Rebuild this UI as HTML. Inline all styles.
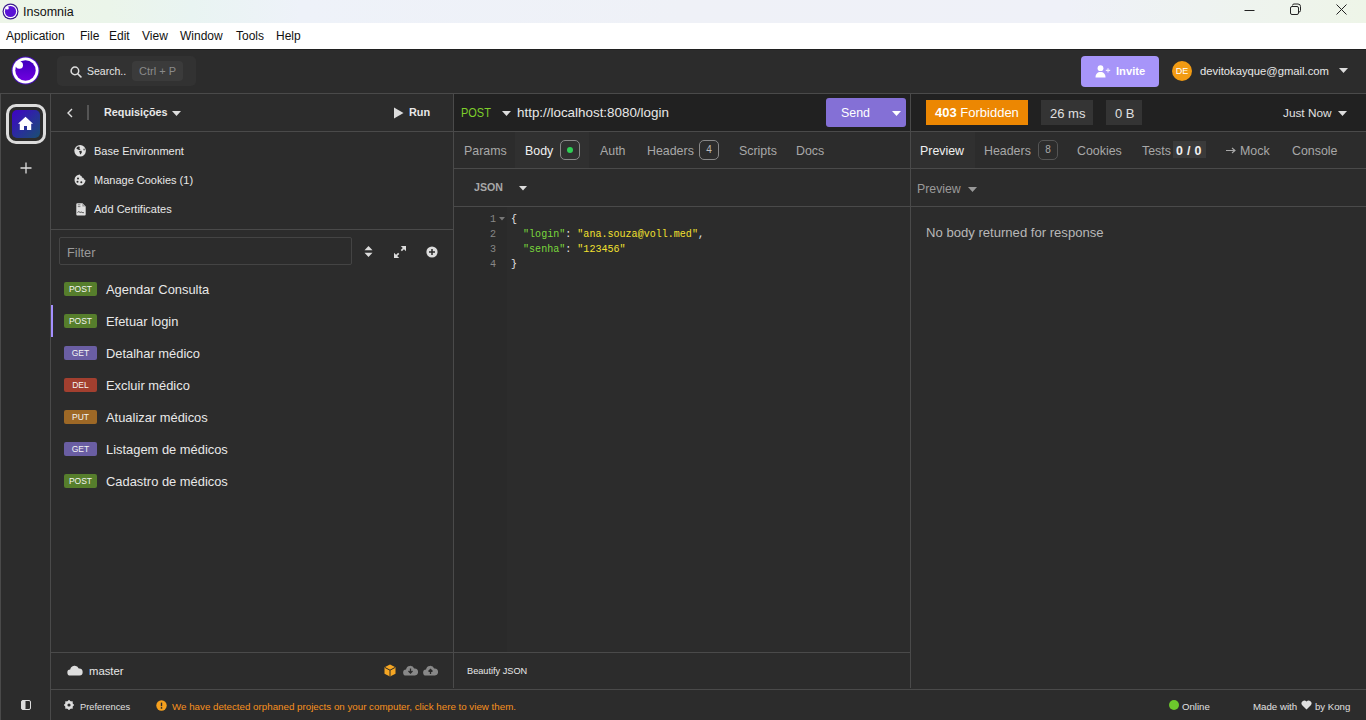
<!DOCTYPE html>
<html><head><meta charset="utf-8">
<style>
*{box-sizing:border-box;margin:0;padding:0}
html,body{width:1366px;height:720px;overflow:hidden;background:#2c2c2c;font-family:"Liberation Sans",sans-serif;color:#ddd}
.a{position:absolute;white-space:nowrap}
#title{left:0;top:0;width:1366px;height:23px;background:linear-gradient(90deg,#edf5e8 0%,#ebf5ea 8%,#e9f4f2 14%,#eef2f9 22%,#eff1f7 50%,#eff1f8 78%,#eef3f1 88%,#eef5e8 100%)}
#menu{left:0;top:23px;width:1366px;height:26px;background:#fff}
.mi{font-size:12px;color:#111;top:29px}
#app{left:0;top:49px;width:1366px;height:671px;background:#2c2c2c;border-top:1px solid #202020}
.line{position:absolute;background:#4a4a4a}
.badge{width:33px;height:14px;border-radius:2px;font-size:8.5px;color:#f4f4f4;text-align:center;line-height:14px}
.tab{top:144px;font-size:12.4px;color:#a8a8a8}
.code{font-family:"Liberation Mono",monospace;font-size:10.05px;line-height:15px}
</style></head>
<body>
<div id="title" class="a"></div>
<svg class="a" style="left:2px;top:3px" width="17" height="17" viewBox="0 0 17 17"><circle cx="8.5" cy="8.5" r="8" fill="#3b1a8c"/><circle cx="8.5" cy="8.5" r="6.8" fill="#fff"/><circle cx="8.5" cy="8.5" r="5.6" fill="#5a12d6"/><circle cx="5.2" cy="5" r="1.6" fill="#fff"/></svg>
<div class="a" style="left:23px;top:5px;font-size:12.5px;color:#111">Insomnia</div>
<!-- window controls -->
<svg class="a" style="left:1240px;top:0" width="126" height="23" viewBox="0 0 126 23">
<path d="M4.5 10.5h10" stroke="#222" stroke-width="1"/>
<rect x="50.5" y="6.5" width="8" height="8" rx="1.5" fill="none" stroke="#222"/>
<path d="M52.5 5.5 q0-1.5 1.5-1.5 h4 q2.5 0 2.5 2.5 v4 q0 1.5 -1.5 1.5" fill="none" stroke="#222"/>
<path d="M96.5 4.5l10 10M106.5 4.5l-10 10" stroke="#222" stroke-width="1"/>
</svg>
<div id="menu" class="a"></div>
<div class="a mi" style="left:6px">Application</div>
<div class="a mi" style="left:80px">File</div>
<div class="a mi" style="left:109px">Edit</div>
<div class="a mi" style="left:142px">View</div>
<div class="a mi" style="left:180px">Window</div>
<div class="a mi" style="left:236px">Tools</div>
<div class="a mi" style="left:276px">Help</div>

<div id="app" class="a"></div>
<!-- structural bg -->
<div class="a" style="left:454px;top:94px;width:912px;height:37px;background:#212121"></div>
<div class="a" style="left:515px;top:132px;width:74px;height:36px;background:#303030"></div>
<div class="a" style="left:911px;top:132px;width:64px;height:36px;background:#303030"></div>
<!-- lines -->
<div class="line" style="left:0;top:93px;width:1366px;height:1px"></div>
<div class="line" style="left:50px;top:94px;width:1px;height:626px"></div>
<div class="line" style="left:0;top:94px;width:1px;height:626px"></div>
<div class="line" style="left:453px;top:94px;width:1px;height:594px"></div>
<div class="line" style="left:910px;top:94px;width:1px;height:594px"></div>
<div class="line" style="left:51px;top:131px;width:1315px;height:1px"></div>
<div class="line" style="left:454px;top:168px;width:912px;height:1px"></div>
<div class="line" style="left:454px;top:206px;width:912px;height:1px"></div>
<div class="line" style="left:51px;top:229px;width:402px;height:1px"></div>
<div class="line" style="left:51px;top:652px;width:859px;height:1px"></div>
<div class="line" style="left:51px;top:689px;width:1315px;height:1px"></div>

<!-- header -->
<svg class="a" style="left:11px;top:56px" width="29" height="29" viewBox="0 0 29 29">
<defs><linearGradient id="lg1" x1="0" y1="0" x2="0" y2="1"><stop offset="0" stop-color="#4000bf"/><stop offset="1" stop-color="#7000e0"/></linearGradient></defs>
<circle cx="14.5" cy="14.5" r="14" fill="#4a10c0"/><circle cx="14.5" cy="14.5" r="13" fill="#fff"/><circle cx="14.5" cy="14.5" r="10.2" fill="url(#lg1)"/><circle cx="8.4" cy="9.2" r="3.6" fill="#fff"/></svg>
<div class="a" style="left:57px;top:56px;width:139px;height:30px;border-radius:5px;background:#323232"></div>
<svg class="a" style="left:70px;top:66px" width="12" height="12" viewBox="0 0 12 12"><circle cx="4.9" cy="4.9" r="3.8" fill="none" stroke="#ddd" stroke-width="1.5"/><path d="M7.7 7.7l3.2 3.2" stroke="#ddd" stroke-width="1.6" stroke-linecap="round"/></svg>
<div class="a" style="left:87px;top:65px;font-size:10.5px;color:#e6e6e6">Search..</div>
<div class="a" style="left:132px;top:61px;width:51px;height:20px;border-radius:4px;background:#3b3b3b"></div>
<div class="a" style="left:139px;top:65px;font-size:11px;color:#8a8a8a">Ctrl + P</div>

<div class="a" style="left:1081px;top:56px;width:78px;height:31px;border-radius:4px;background:#a795f9"></div>
<svg class="a" style="left:1095px;top:65px" width="16" height="13" viewBox="0 0 16 13"><circle cx="5.5" cy="3.2" r="2.9" fill="#fff"/><path d="M0.5 12.5c0-3.6 2-5.5 5-5.5s5 1.9 5 5.5z" fill="#fff"/><path d="M13 3.2v4.4M10.8 5.4h4.4" stroke="#f0ecff" stroke-width="1.1"/></svg>
<div class="a" style="left:1116px;top:65px;font-size:11.2px;font-weight:bold;color:#fff">Invite</div>
<div class="a" style="left:1172px;top:61px;width:20px;height:20px;border-radius:50%;background:#f29b13"></div>
<div class="a" style="left:1172px;top:66px;width:20px;text-align:center;font-size:9px;color:#fff">DE</div>
<div class="a" style="left:1200px;top:65px;font-size:11.25px;color:#e8e8e8">devitokayque@gmail.com</div>
<svg class="a" style="left:1339px;top:68px" width="9" height="6" viewBox="0 0 9 6"><path d="M0 0h9L4.5 5z" fill="#ddd"/></svg>

<!-- left rail -->
<div class="a" style="left:6px;top:104px;width:40px;height:40px;border:3px solid #dcdcdc;border-radius:10px"></div>
<div class="a" style="left:12px;top:110px;width:28px;height:28px;border-radius:5px;background:linear-gradient(135deg,#4000c8 0%,#28309a 55%,#1a4f70 100%)"></div>
<svg class="a" style="left:18px;top:116px" width="15" height="15" viewBox="0 0 15 15"><path d="M7.5 0.8L0 7.7h1.8V14h4.2v-4h3v4h4.2V7.7H15z" fill="#fff"/></svg>
<svg class="a" style="left:20px;top:162px" width="12" height="12" viewBox="0 0 12 12"><path d="M6 0.5v11M0.5 6h11" stroke="#ddd" stroke-width="1.3"/></svg>
<svg class="a" style="left:21px;top:700px" width="10" height="10" viewBox="0 0 10 10"><rect x="0.5" y="0.5" width="9" height="9" rx="1.5" fill="none" stroke="#ddd"/><rect x="0.5" y="0.5" width="4" height="9" rx="1" fill="#ddd"/></svg>

<!-- sidebar header -->
<svg class="a" style="left:66px;top:108px" width="8" height="10" viewBox="0 0 8 10"><path d="M6 1L2 5l4 4" fill="none" stroke="#ddd" stroke-width="1.4"/></svg>
<div class="a" style="left:87px;top:105px;width:2px;height:15px;background:#555"></div>
<div class="a" style="left:104px;top:106px;font-size:10.8px;font-weight:bold;color:#e8e8e8">Requisições</div>
<svg class="a" style="left:172px;top:111px" width="9" height="6" viewBox="0 0 9 6"><path d="M0 0h9L4.5 5z" fill="#ddd"/></svg>
<svg class="a" style="left:393px;top:107px" width="11" height="12" viewBox="0 0 11 12"><path d="M1 0.5L10.5 6L1 11.5z" fill="#ddd"/></svg>
<div class="a" style="left:409px;top:106px;font-size:10.9px;font-weight:bold;color:#e8e8e8">Run</div>

<!-- sidebar items -->
<svg class="a" style="left:74px;top:145px" width="12" height="12" viewBox="0 0 12 12"><circle cx="6.1" cy="5.8" r="5.8" fill="#e0e0e0"/><path d="M2.2 3.2L4 1.4L5.9 1.8L5.4 3.6L6.6 4.6L5.2 4.9L3.8 4.4z" fill="#2c2c2c"/><path d="M5.1 5.9L7.6 5.7L7.8 7.4L6.9 8.9L6.2 9.4L5.6 7.4z" fill="#2c2c2c"/><ellipse cx="10.1" cy="4.5" rx="0.9" ry="1" fill="#666"/></svg>
<div class="a" style="left:94px;top:145px;font-size:11px;color:#e8e8e8">Base Environment</div>
<svg class="a" style="left:74px;top:174px" width="12" height="12" viewBox="0 0 12 12"><path d="M6 0.5a5.5 5.5 0 1 0 5.5 5.5a2 2 0 0 1-2-2a2 2 0 0 1-2-2a1.5 1.5 0 0 1-1.5-1.5z" fill="#ddd"/><circle cx="4" cy="4.5" r="1" fill="#2a2a2a"/><circle cx="3.5" cy="7.8" r="1" fill="#2a2a2a"/><circle cx="7.3" cy="8.3" r="1" fill="#2a2a2a"/></svg>
<div class="a" style="left:94px;top:174px;font-size:11px;color:#e8e8e8">Manage Cookies (1)</div>
<svg class="a" style="left:75.5px;top:203px" width="10" height="13" viewBox="0 0 10 13"><path d="M0.3 1.2a1 1 0 0 1 1-1h5.2l3.2 3.2v8.2a1 1 0 0 1-1 1H1.3a1 1 0 0 1-1-1z" fill="#e0e0e0"/><path d="M6.3 0.3v3.3h3.3z" fill="#999"/><path d="M1.8 1.8h2.6M1.8 3.6h2.6" stroke="#555" stroke-width="0.7"/><path d="M1.5 9.4q1.2-1.2 1.9-0.4t1.3 0.3t1.6 0.2t1.6-0.2" stroke="#333" stroke-width="0.9" fill="none"/></svg>
<div class="a" style="left:94px;top:203px;font-size:11px;color:#e8e8e8">Add Certificates</div>

<!-- filter -->
<div class="a" style="left:59px;top:237px;width:293px;height:28px;border:1px solid #444;border-radius:2px"></div>
<div class="a" style="left:67px;top:245px;font-size:12.8px;color:#9a9a9a">Filter</div>
<svg class="a" style="left:364px;top:246px" width="9" height="11" viewBox="0 0 9 11"><path d="M4.5 0L8.5 4.3H0.5zM4.5 11L8.5 6.7H0.5z" fill="#ddd"/></svg>
<svg class="a" style="left:394px;top:246px" width="12" height="12" viewBox="0 0 12 12"><path d="M6.8 0h5.2v5.2z M5.2 12H0V6.8z" fill="#ddd"/><path d="M10.5 1.5L7.3 4.7M1.5 10.5l3.2-3.2" stroke="#ddd" stroke-width="1.7"/></svg>
<svg class="a" style="left:426px;top:246px" width="12" height="12" viewBox="0 0 12 12"><circle cx="6" cy="6" r="5.6" fill="#ddd"/><path d="M6 3v6M3 6h6" stroke="#2a2a2a" stroke-width="1.5"/></svg>

<!-- request list -->
<div class="a" style="left:51px;top:305px;width:2px;height:32px;background:#a590ff"></div>
<div class="a badge" style="left:64px;top:282px;background:#567e2c">POST</div>
<div class="a" style="left:106px;top:282px;font-size:12.9px;color:#e8e8e8">Agendar Consulta</div>
<div class="a badge" style="left:64px;top:314px;background:#567e2c">POST</div>
<div class="a" style="left:106px;top:314px;font-size:12.9px;color:#e8e8e8">Efetuar login</div>
<div class="a badge" style="left:64px;top:346px;background:#6a5ea3">GET</div>
<div class="a" style="left:106px;top:346px;font-size:12.9px;color:#e8e8e8">Detalhar médico</div>
<div class="a badge" style="left:64px;top:378px;background:#a23f2f">DEL</div>
<div class="a" style="left:106px;top:378px;font-size:12.9px;color:#e8e8e8">Excluir médico</div>
<div class="a badge" style="left:64px;top:410px;background:#9d6826">PUT</div>
<div class="a" style="left:106px;top:410px;font-size:12.9px;color:#e8e8e8">Atualizar médicos</div>
<div class="a badge" style="left:64px;top:442px;background:#6a5ea3">GET</div>
<div class="a" style="left:106px;top:442px;font-size:12.9px;color:#e8e8e8">Listagem de médicos</div>
<div class="a badge" style="left:64px;top:474px;background:#567e2c">POST</div>
<div class="a" style="left:106px;top:474px;font-size:12.9px;color:#e8e8e8">Cadastro de médicos</div>

<!-- sidebar bottom -->
<svg class="a" style="left:67px;top:665px" width="16" height="11" viewBox="0 0 16 11"><path d="M3.5 10.5a3 3 0 0 1-0.3-6a4.5 4.5 0 0 1 8.6-1a3.5 3.5 0 0 1 0.7 7z" fill="#ddd"/></svg>
<div class="a" style="left:89px;top:665px;font-size:11.3px;color:#e8e8e8">master</div>
<svg class="a" style="left:384px;top:664px" width="12" height="13" viewBox="0 0 12 13"><path d="M6 0.5l5.5 2.8v6.4L6 12.5L0.5 9.7V3.3z" fill="#f5a623"/><path d="M0.8 3.4L6 6.2l5.2-2.8M6 6.2v6.2" stroke="#2a2a2a" stroke-width="1" fill="none"/></svg>
<svg class="a" style="left:403px;top:665px" width="15" height="11" viewBox="0 0 15 11"><path d="M3.3 10.5a3 3 0 0 1-0.3-6a4.3 4.3 0 0 1 8.2-1a3.3 3.3 0 0 1 0.7 7z" fill="#888"/><path d="M7.5 3.5v4.5M5.5 6l2 2 2-2" stroke="#2a2a2a" stroke-width="1.3" fill="none"/></svg>
<svg class="a" style="left:423px;top:665px" width="15" height="11" viewBox="0 0 15 11"><path d="M3.3 10.5a3 3 0 0 1-0.3-6a4.3 4.3 0 0 1 8.2-1a3.3 3.3 0 0 1 0.7 7z" fill="#888"/><path d="M7.5 9V4.5M5.5 6.5l2-2 2 2" stroke="#2a2a2a" stroke-width="1.3" fill="none"/></svg>

<!-- request pane -->
<div class="a" style="left:461px;top:106px;font-size:12.6px;color:#7ecf2b;transform:scaleX(0.87);transform-origin:0 0">POST</div>
<svg class="a" style="left:502px;top:111px" width="9" height="6" viewBox="0 0 9 6"><path d="M0 0h9L4.5 5z" fill="#ddd"/></svg>
<div class="a" style="left:517px;top:105px;font-size:13.4px;color:#e8e8e8">http://localhost:8080/login</div>
<div class="a" style="left:826px;top:98px;width:80px;height:29px;border-radius:3px;background:#8470d6"></div>
<div class="a" style="left:841px;top:106px;font-size:12.4px;color:#fff">Send</div>
<svg class="a" style="left:892px;top:111px" width="9" height="6" viewBox="0 0 9 6"><path d="M0 0h9L4.5 5z" fill="#fff"/></svg>

<div class="a tab" style="left:464px">Params</div>
<div class="a tab" style="left:525px;color:#f0f0f0">Body</div>
<div class="a" style="left:560px;top:140px;width:20px;height:20px;border:1px solid #888;border-radius:5px"></div>
<div class="a" style="left:567px;top:147px;width:6px;height:6px;border-radius:50%;background:#2fcf55"></div>
<div class="a tab" style="left:600px">Auth</div>
<div class="a tab" style="left:647px">Headers</div>
<div class="a" style="left:699px;top:140px;width:20px;height:20px;border:1px solid #888;border-radius:5px;font-size:10px;color:#bbb;text-align:center;line-height:18px">4</div>
<div class="a tab" style="left:739px">Scripts</div>
<div class="a tab" style="left:796px">Docs</div>

<div class="a" style="left:474px;top:181px;font-size:10.6px;font-weight:bold;color:#a8a8a8">JSON</div>
<svg class="a" style="left:519px;top:186px" width="8" height="5" viewBox="0 0 8 5"><path d="M0 0h8L4 4.5z" fill="#ddd"/></svg>

<div class="a" style="left:454px;top:207px;width:53px;height:445px;background:#2a2a2a"></div>
<div class="a code" style="left:470px;top:212px;width:26px;text-align:right;color:#888">1<br>2<br>3<br>4</div>
<svg class="a" style="left:499px;top:217px" width="6" height="4" viewBox="0 0 6 4"><path d="M0 0h6L3 3.5z" fill="#777"/></svg>
<div class="a code" style="left:511px;top:212px;color:#e8e8e8">{<br>&nbsp;&nbsp;<span style="color:#7ad83c">"login"</span>: <span style="color:#f2e12f">"ana.souza@voll.med"</span>,<br>&nbsp;&nbsp;<span style="color:#7ad83c">"senha"</span>: <span style="color:#f2e12f">"123456"</span><br>}</div>

<div class="a" style="left:467px;top:666px;font-size:9.2px;color:#e8e8e8">Beautify JSON</div>

<!-- response pane -->
<div class="a" style="left:926px;top:100px;width:102px;height:25px;background:#ec8702"></div>
<div class="a" style="left:935px;top:105px;font-size:13px;color:#fff"><b>403</b> Forbidden</div>
<div class="a" style="left:1041px;top:100px;width:52px;height:25px;background:#343434"></div>
<div class="a" style="left:1050px;top:106px;font-size:13px;color:#e0e0e0">26 ms</div>
<div class="a" style="left:1106px;top:100px;width:36px;height:25px;background:#343434"></div>
<div class="a" style="left:1115px;top:106px;font-size:13px;color:#e0e0e0">0 B</div>
<div class="a" style="left:1283px;top:106px;font-size:11.8px;color:#e0e0e0">Just Now</div>
<svg class="a" style="left:1338px;top:111px" width="9" height="6" viewBox="0 0 9 6"><path d="M0 0h9L4.5 5z" fill="#ddd"/></svg>

<div class="a tab" style="left:920px;color:#f0f0f0">Preview</div>
<div class="a tab" style="left:984px">Headers</div>
<div class="a" style="left:1038px;top:140px;width:20px;height:20px;border:1px solid #555;border-radius:5px;font-size:10px;color:#aaa;text-align:center;line-height:18px">8</div>
<div class="a tab" style="left:1077px">Cookies</div>
<div class="a tab" style="left:1142px">Tests</div>
<div class="a" style="left:1173px;top:141px;width:33px;height:17px;background:#3a3a3a"></div>
<div class="a tab" style="left:1176px;color:#f0f0f0;font-weight:bold;letter-spacing:0.3px">0 / 0</div>
<svg class="a" style="left:1226px;top:147px" width="10" height="7" viewBox="0 0 10 7"><path d="M0 3.5h8.5M6 1l3 2.5L6 6" stroke="#a8a8a8" stroke-width="1.1" fill="none"/></svg><div class="a tab" style="left:1240px">Mock</div>
<div class="a tab" style="left:1292px">Console</div>

<div class="a" style="left:917px;top:182px;font-size:12.3px;color:#9a9a9a">Preview</div>
<svg class="a" style="left:968px;top:187px" width="9" height="6" viewBox="0 0 9 6"><path d="M0 0h9L4.5 5z" fill="#999"/></svg>
<div class="a" style="left:926px;top:225px;font-size:13.1px;color:#b8b8b8">No body returned for response</div>

<!-- status bar -->
<svg class="a" style="left:64px;top:700px" width="10" height="10" viewBox="0 0 10 10"><path d="M8.81 4.16 L9.96 4.35 L9.96 5.65 L8.81 5.84 L8.28 7.10 L8.96 8.05 L8.05 8.96 L7.10 8.28 L5.84 8.81 L5.65 9.96 L4.35 9.96 L4.16 8.81 L2.90 8.28 L1.95 8.96 L1.04 8.05 L1.72 7.10 L1.19 5.84 L0.04 5.65 L0.04 4.35 L1.19 4.16 L1.72 2.90 L1.04 1.95 L1.95 1.04 L2.90 1.72 L4.16 1.19 L4.35 0.04 L5.65 0.04 L5.84 1.19 L7.10 1.72 L8.05 1.04 L8.96 1.95 L8.28 2.90Z" fill="#ddd"/><circle cx="5" cy="5" r="3.9" fill="#ddd"/><circle cx="5" cy="5" r="1.6" fill="#2c2c2c"/></svg>
<div class="a" style="left:80px;top:702px;font-size:9.3px;color:#e0e0e0">Preferences</div>
<svg class="a" style="left:155.5px;top:699.5px" width="11" height="11" viewBox="0 0 11 11"><circle cx="5.5" cy="5.5" r="5.2" fill="#f5a01e"/><path d="M5.5 2.6v3.6" stroke="#2c2c2c" stroke-width="1.4"/><circle cx="5.5" cy="7.9" r="0.85" fill="#2c2c2c"/></svg>
<div class="a" style="left:172px;top:701px;font-size:9.75px;color:#f6901e">We have detected orphaned projects on your computer, click here to view them.</div>
<div class="a" style="left:1169px;top:700px;width:10px;height:10px;border-radius:50%;background:#6cc72c"></div>
<div class="a" style="left:1182px;top:701px;font-size:9.65px;color:#e0e0e0">Online</div>
<div class="a" style="left:1253px;top:701px;font-size:9.7px;color:#e0e0e0">Made with</div><svg class="a" style="left:1301px;top:700px" width="11" height="10" viewBox="0 0 11 10"><path d="M5.5 9.5L1.2 5.2A2.6 2.6 0 0 1 5.5 1.6A2.6 2.6 0 0 1 9.8 5.2z" fill="#e0e0e0"/></svg><div class="a" style="left:1315px;top:701px;font-size:9.65px;color:#e0e0e0">by Kong</div>
</body></html>
